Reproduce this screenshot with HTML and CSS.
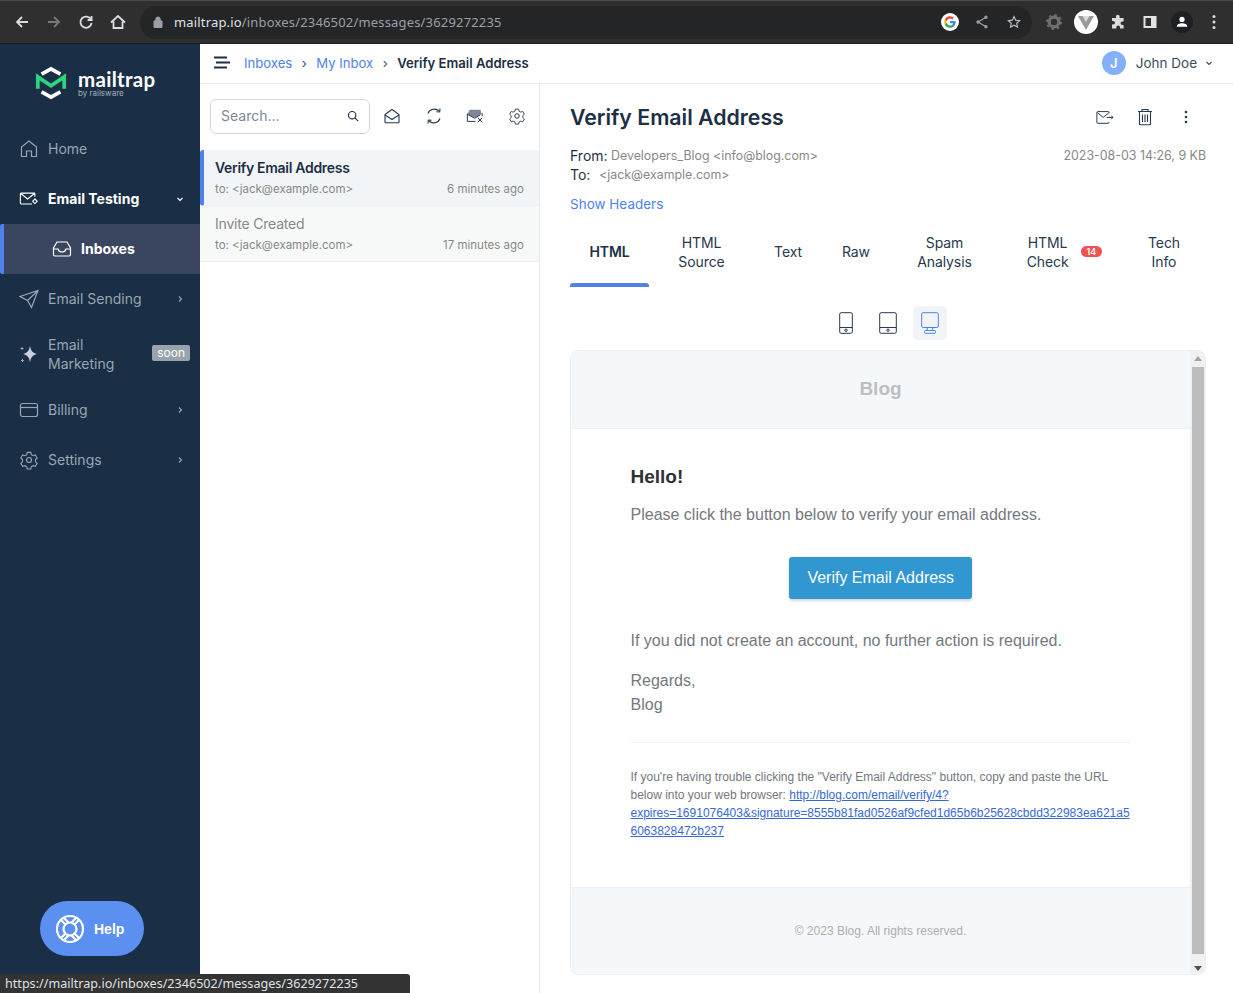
FILE: index.html
```html
<!DOCTYPE html>
<html>

<head>
  <meta charset="utf-8">
  <title>Verify Email Address</title>
  <link rel="stylesheet" href="styles.css">
</head>

<body>

  <!-- browser toolbar -->
  <header class="browser">
    <div class="browser-nav">
      <svg class="b-icon" viewBox="0 0 16 16"><path d="M14 8H3M8 3 3 8l5 5" /></svg>
      <svg class="b-icon dim" viewBox="0 0 16 16"><path d="M2 8h11M8 3l5 5-5 5" /></svg>
      <svg class="b-icon" viewBox="0 0 16 16"><path d="M13 5.5A5.6 5.6 0 1 0 13.6 9M13.6 2v4h-4" /></svg>
      <svg class="b-icon" viewBox="0 0 16 16"><path d="M1 8.5 8 2l7 6.500M3.500 7.500V14h9V7.500" /></svg>
    </div>
    <div class="omnibox">
      <svg class="lock" viewBox="0 0 10 12"><path d="M1 5h8v6.500H1zM2.800 5V3.200a2.200 2.200 0 0 1 4.400 0V5" /></svg>
      <span class="url"><b>mailtrap.io</b>/inboxes/2346502/messages/3629272235</span>
      <svg class="g-logo" viewBox="0 0 18 18">
        <circle cx="9" cy="9" r="9" fill="#fff" />
        <path d="M14.600 9.100c0-.4 0-.8-.1-1.100H9v2.200h3.100a2.700 2.700 0 0 1-1.100 1.700v1.500h1.900c1.100-1 1.700-2.500 1.700-4.300z" fill="#4285f4" />
        <path d="M9 14.800c1.600 0 2.900-.5 3.900-1.400L11 11.900c-.5.400-1.200.6-2 .6-1.500 0-2.800-1-3.300-2.400H3.800v1.500A5.800 5.800 0 0 0 9 14.800z" fill="#34a853" />
        <path d="M5.700 10.100a3.500 3.500 0 0 1 0-2.200V6.400H3.800a5.800 5.800 0 0 0 0 5.200z" fill="#fbbc05" />
        <path d="M9 5.500c.9 0 1.600.3 2.200.9l1.700-1.700A5.800 5.800 0 0 0 3.800 6.400l1.900 1.500C6.200 6.500 7.500 5.500 9 5.500z" fill="#ea4335" />
      </svg>
      <svg class="b-icon small" viewBox="0 0 16 16"><path d="M12.500 2.500 3.500 8l9 5.500" /><circle cx="12.500" cy="2.500" r="1.300" fill="#9aa0a6" /><circle cx="3.500" cy="8" r="1.300" fill="#9aa0a6" /><circle cx="12.500" cy="13.500" r="1.300" fill="#9aa0a6" /></svg>
      <svg class="b-icon small star" viewBox="0 0 16 16"><path d="m8 1.800 1.900 4.100 4.500.5-3.300 3 .9 4.500L8 11.600l-4 2.300.9-4.500-3.300-3 4.500-.5z" /></svg>
    </div>
    <div class="browser-ext">
      <svg class="ext-gear" viewBox="0 0 16 16"><circle cx="8" cy="8" r="4.800" fill="none" stroke="#6f6f6f" stroke-width="3.200" /><circle cx="8" cy="8" r="7" fill="none" stroke="#6f6f6f" stroke-width="2" stroke-dasharray="2.500 3" /></svg>
      <span class="ext-vue"><svg viewBox="0 0 16 14"><path d="M0 0h16L8 14z" fill="#9a9a9a" /><path d="M4.500 0h7L8 6z" fill="#dcdcdc" /></svg></span>
      <svg class="ext-icon" viewBox="0 0 16 16"><path d="M6 2.500a1.800 1.800 0 0 1 3.600 0V4h4v3.500h-1.300a1.800 1.800 0 0 0 0 3.600h1.300v3.400H10v-1.200a1.800 1.800 0 0 0-3.600 0v1.200H2v-4h1.200a1.800 1.800 0 0 0 0-3.600H2V4h4z" fill="#dcdcdc" /></svg>
      <svg class="ext-icon" viewBox="0 0 16 16"><path d="M1.500 2h13v12h-13zM3.500 4v8H9V4z" fill="#e3e3e3" fill-rule="evenodd" /></svg>
      <span class="ext-user"><svg viewBox="0 0 16 16"><circle cx="8" cy="5" r="3" fill="#fff" /><path d="M2 13.500c0-3 3-4 6-4s6 1 6 4z" fill="#fff" /></svg></span>
      <svg class="ext-more" viewBox="0 0 4 16"><circle cx="2" cy="2.500" r="1.500" /><circle cx="2" cy="8" r="1.500" /><circle cx="2" cy="13.500" r="1.500" /></svg>
    </div>
  </header>

  <div class="app">

    <!-- left navigation -->
    <aside class="sidebar">
      <div class="logo">
        <svg class="logo-mark" viewBox="0 0 34 36" fill="none" stroke-width="4">
          <path d="M7 8.500 17 3l10 5.500" stroke="#fff" />
          <path d="M7 27.500 17 33l10-5.500" stroke="#fff" />
          <path d="M3 24V11.500l14 9.500 14-9.500V24" stroke="#2dd283" />
        </svg>
        <div class="logo-text">
          <div class="logo-name">mailtrap</div>
          <div class="logo-by">by railsware</div>
        </div>
      </div>
      <nav class="nav">
        <a class="nav-item">
          <svg class="nav-icon" viewBox="0 0 20 20"><path d="M2.500 17.500V8L10 2l7.500 6v9.500h-5V12h-5v5.500z" /></svg>
          <span class="nav-label">Home</span>
        </a>
        <a class="nav-item is-open">
          <svg class="nav-icon" viewBox="0 0 22 20"><path d="M14.500 15.500H2.500a1 1 0 0 1-1-1v-10a1 1 0 0 1 1-1h14a1 1 0 0 1 1 1v3M2 4l7.500 6L17 4" /><path d="m17.500 10 2.500 2.500-2.500 2.500-2.500-2.500z" /></svg>
          <span class="nav-label">Email Testing</span>
          <svg class="chev" viewBox="0 0 8 8"><path d="m1.500 3 2.500 2.500L6.500 3" /></svg>
        </a>
        <a class="nav-item nav-sub">
          <svg class="nav-icon" viewBox="0 0 20 20"><path d="M5 3h10l3.500 6v6.500a1.500 1.500 0 0 1-1.500 1.500H3a1.500 1.500 0 0 1-1.500-1.500V9zM1.500 10H6c.5 2 2 3 4 3s3.500-1 4-3h4.500" /></svg>
          <span class="nav-label">Inboxes</span>
        </a>
        <a class="nav-item">
          <svg class="nav-icon" viewBox="0 0 20 20"><path d="M1 7.500 19 1.500 12.500 18.500 8.500 11.500zM8.500 11.500 19 1.500" /></svg>
          <span class="nav-label">Email Sending</span>
          <svg class="chev" viewBox="0 0 8 8"><path d="m3 1.500 2.500 2.500L3 6.500" /></svg>
        </a>
        <a class="nav-item nav-tall">
          <svg class="nav-icon" viewBox="0 0 20 20"><path class="spark" d="M11 1.500c.8 5 2 7 7 8.500-5 1.500-6.200 3.500-7 8.500-.8-5-2-7-7-8.500 5-1.500 6.200-3.500 7-8.500z" /><path d="M3 3v3M1.500 4.500h3M3.500 15v3M2 16.500h3" stroke-width="1" /></svg>
          <span class="nav-label">Email<br>Marketing</span>
          <span class="soon">soon</span>
        </a>
        <a class="nav-item">
          <svg class="nav-icon" viewBox="0 0 20 20"><rect x="1.500" y="3.500" width="17" height="13" rx="2" /><path d="M1.500 7.500h17" /></svg>
          <span class="nav-label">Billing</span>
          <svg class="chev" viewBox="0 0 8 8"><path d="m3 1.500 2.500 2.500L3 6.500" /></svg>
        </a>
        <a class="nav-item">
          <svg class="nav-icon" viewBox="0 0 20 20"><path d="M8 1.500h4l.5 2.500 2.200 1.200 2.400-.8 2 3.400-1.900 1.700v2.500l1.900 1.700-2 3.400-2.400-.8-2.200 1.200-.5 2.500H8l-.5-2.500-2.200-1.200-2.400.8-2-3.400 1.900-1.700V9.500L.900 7.800l2-3.400 2.400.8L7.500 4z" transform="translate(1 1) scale(.9)" /><circle cx="10" cy="10" r="2.500" /></svg>
          <span class="nav-label">Settings</span>
          <svg class="chev" viewBox="0 0 8 8"><path d="m3 1.500 2.500 2.500L3 6.500" /></svg>
        </a>
      </nav>
      <button class="help">
        <svg viewBox="0 0 30 30" fill="none" stroke="#fff" stroke-width="2.200">
          <circle cx="15" cy="15" r="13" />
          <circle cx="15" cy="15" r="6.500" />
          <path d="m5.500 5.500 5 5M24.500 5.500l-5 5M5.500 24.500l5-5M24.500 24.500l-5-5M9 4l4.500 4.500M21 4l-4.500 4.500M9 26l4.500-4.500M21 26l-4.500-4.500" />
        </svg>
        Help
      </button>
    </aside>

    <div class="content">

      <!-- breadcrumbs -->
      <div class="topbar">
        <svg class="burger" viewBox="0 0 16 13"><path d="M0 1.500h13M2 6.500h14M0 11.500h13" /></svg>
        <a class="crumb">Inboxes</a>
        <span class="crumb-sep">›</span>
        <a class="crumb">My Inbox</a>
        <span class="crumb-sep">›</span>
        <span class="crumb-now">Verify Email Address</span>
        <div class="user">
          <span class="avatar">J</span>
          <span class="user-name">John Doe</span>
          <svg class="user-chev" viewBox="0 0 8 8"><path d="m1.500 3 2.500 2.500L6.500 3" /></svg>
        </div>
      </div>

      <div class="columns">

        <!-- message list -->
        <section class="list">
          <div class="list-tools">
            <div class="search">
              <span class="search-text">Search...</span>
              <svg class="tool-sm" viewBox="0 0 14 14"><circle cx="6" cy="6" r="4.300" /><path d="m9.200 9.200 3.800 3.800" /></svg>
            </div>
            <svg class="tool" viewBox="0 0 18 18"><path d="M2 7.500 9 2.500l7 5V15a.8.8 0 0 1-.8.800H2.800A.8.8 0 0 1 2 15z" /><path d="m2 8 7 4.500L16 8" /></svg>
            <svg class="tool" viewBox="0 0 18 18"><path d="M3 6.500A6.800 6.800 0 0 1 14 4M15 11.500A6.800 6.800 0 0 1 4 14" /><path d="m15 1.500-.3 3.500-3.200-.3M3 16.500l.3-3.500 3.200.3" /></svg>
            <svg class="tool" viewBox="0 0 20 18"><path class="tool-fill" d="M1.500 7 4 2h12l1.500 5-8 4z" /><path d="M1.500 6.500V15h9M18 6V9M1.500 7l8 4.500 6-3.500M13 11l5 5M18 11l-5 5" /></svg>
            <svg class="tool" viewBox="0 0 20 20"><path d="M8 1.500h4l.5 2.500 2.200 1.200 2.400-.8 2 3.400-1.900 1.700v2.500l1.900 1.700-2 3.400-2.400-.8-2.200 1.200-.5 2.500H8l-.5-2.500-2.200-1.200-2.400.8-2-3.400 1.900-1.700V9.500L.900 7.800l2-3.400 2.400.8L7.500 4z" transform="translate(1 1) scale(.9)" /><circle cx="10" cy="10" r="2.500" /></svg>
          </div>
          <a class="msg is-active">
            <div class="msg-subject">Verify Email Address</div>
            <div class="msg-meta"><span>to: &lt;jack@example.com&gt;</span><span>6 minutes ago</span></div>
          </a>
          <a class="msg">
            <div class="msg-subject">Invite Created</div>
            <div class="msg-meta"><span>to: &lt;jack@example.com&gt;</span><span>17 minutes ago</span></div>
          </a>
        </section>

        <!-- message details -->
        <section class="detail">
          <div class="detail-head">
            <h1>Verify Email Address</h1>
            <div class="detail-actions">
              <svg class="tool" viewBox="0 0 20 16"><path d="M14.500 13.500v.5a1 1 0 0 1-1 1H2a1 1 0 0 1-1-1V3a1 1 0 0 1 1-1h11.500a1 1 0 0 1 1 1v1M1.500 3l6.500 5.500L14 3.500" /><path d="M12 8.500h7M17 6.800l2 1.700-2 1.700" /></svg>
              <svg class="tool" viewBox="0 0 16 18"><path d="M1 3.500h14M5 3.500V1.500h6v2M2.500 3.500V16a.8.8 0 0 0 .8.800h9.400a.8.8 0 0 0 .8-.8V3.500M5.500 6.500v7.500M8 6.500v7.500M10.500 6.500v7.500" /></svg>
              <svg class="more" viewBox="0 0 4 16"><circle cx="2" cy="3" r="1.300" /><circle cx="2" cy="8" r="1.300" /><circle cx="2" cy="13" r="1.300" /></svg>
            </div>
          </div>
          <div class="meta-row">
            <span class="meta-key">From:</span>
            <span class="meta-val">Developers_Blog &lt;info@blog.com&gt;</span>
            <span class="meta-date">2023-08-03 14:26, 9 KB</span>
          </div>
          <div class="meta-row">
            <span class="meta-key meta-to">To:</span>
            <span class="meta-val">&lt;jack@example.com&gt;</span>
          </div>
          <a class="show-headers">Show Headers</a>

          <div class="tabs">
            <a class="tab tab-html is-active">HTML</a>
            <a class="tab tab-source">HTML<br>Source</a>
            <a class="tab tab-text">Text</a>
            <a class="tab tab-raw">Raw</a>
            <a class="tab tab-spam">Spam<br>Analysis</a>
            <a class="tab tab-check"><span>HTML<br>Check</span><span class="count">14</span></a>
            <a class="tab tab-tech">Tech<br>Info</a>
          </div>

          <div class="devices">
            <span class="device"><svg viewBox="0 0 14 22"><rect x=".7" y=".7" width="12.600" height="20.600" rx="1.500" /><path d="M.7 15.500h12.600" /><circle cx="7" cy="18.200" r="1.200" /></svg></span>
            <span class="device"><svg viewBox="0 0 18 22"><rect x=".7" y=".7" width="16.600" height="20.600" rx="1.500" /><path d="M.7 15.500h16.600" /><circle cx="9" cy="18.200" r="1.200" /></svg></span>
            <span class="device is-active"><svg viewBox="0 0 18 22"><rect x=".7" y=".7" width="16.600" height="14.800" rx="1.500" /><path d="M6.500 15.500 6 18.500M11.500 15.500l.5 3" /><rect x="3.500" y="18.500" width="11" height="2.800" rx=".8" /></svg></span>
          </div>

          <!-- rendered email -->
          <div class="frame">
            <div class="mail">
              <div class="mail-brand">Blog</div>
              <div class="mail-body">
                <h2>Hello!</h2>
                <p>Please click the button below to verify your email address.</p>
                <div class="mail-cta"><a class="mail-button">Verify Email Address</a></div>
                <p>If you did not create an account, no further action is required.</p>
                <p class="mail-sign">Regards,<br>Blog</p>
                <div class="mail-sub">If you're having trouble clicking the "Verify Email Address" button, copy and paste the URL below into your web browser: <a>http://blog.com/email/verify/4?expires=1691076403&amp;signature=8555b81fad0526af9cfed1d65b6b25628cbdd322983ea621a56063828472b237</a></div>
              </div>
              <div class="mail-footer">© 2023 Blog. All rights reserved.</div>
            </div>
            <div class="scrollbar">
              <span class="arrow-up"></span>
              <span class="thumb"></span>
              <span class="arrow-down"></span>
            </div>
          </div>
        </section>
      </div>
    </div>
  </div>

  <div class="status">https://mailtrap.io/inboxes/2346502/messages/3629272235</div>

</body>

</html>
```

FILE: styles.css
```css
* {
  box-sizing: border-box;
}

html,
body {
  margin: 0;
  height: 993px;
  overflow: hidden;
}

body {
  font-family: "Inter", "Liberation Sans", sans-serif;
  color: #1d2f45;
  background-color: #fff;
}

svg {
  display: block;
  flex: none;
}

a {
  text-decoration: none;
}

/*********** Browser toolbar ***********/

.browser {
  height: 44px;
  display: flex;
  align-items: center;
  background-color: #2f2f2f;
  border-top: 1px solid #4a4a4a;
  border-bottom: 1px solid #1c1c1c;
}

.browser-nav {
  width: 140px;
  padding-left: 14px;
  display: flex;
  gap: 16px;
}

.b-icon {
  width: 16px;
  height: 16px;
  fill: none;
  stroke: #dadce0;
  stroke-width: 1.800;
}

.b-icon.dim {
  stroke: #777;
}

.b-icon.small {
  width: 14px;
  height: 14px;
  stroke: #9aa0a6;
  stroke-width: 1.300;
}

.b-icon.star {
  stroke: #c0c0c0;
}

.omnibox {
  width: 892px;
  height: 33px;
  padding: 0 11px 0 13px;
  display: flex;
  align-items: center;
  background-color: #242526;
  border-radius: 17px;
}

.lock {
  width: 10px;
  height: 12px;
  fill: #9aa0a6;
  stroke: #9aa0a6;
  stroke-width: 1;
}

.url {
  margin-left: 11px;
  font-family: "Noto Sans", sans-serif;
  font-size: 13px;
  letter-spacing: 0.17px;
  color: #9aa0a6;
  flex: 1;
}

.url b {
  font-weight: 400;
  color: #dfe1e5;
}

.g-logo {
  width: 18px;
  height: 18px;
  margin-right: 16px;
}

.star {
  margin-left: 18px;
}

.browser-ext {
  flex: 1;
  display: flex;
  align-items: center;
  padding-left: 14px;
}

.ext-gear {
  width: 16px;
  height: 16px;
}

.ext-vue {
  width: 24px;
  height: 24px;
  margin-left: 12px;
  padding: 6px 4px;
  border-radius: 50%;
  background-color: #fff;
}

.ext-icon {
  width: 16px;
  height: 16px;
  margin-left: 12px;
}

.ext-icon + .ext-icon {
  margin-left: 16px;
}

.ext-user {
  width: 22px;
  height: 22px;
  margin-left: 13px;
  padding: 4px;
  border-radius: 50%;
  background-color: #1e1f22;
}

.ext-more {
  width: 4px;
  height: 16px;
  margin-left: 19px;
  fill: #dadce0;
}

/*********** App shell ***********/

.app {
  height: 949px;
  display: flex;
}

.sidebar {
  width: 200px;
  flex: none;
  display: flex;
  flex-direction: column;
  background-color: #1a2e45;
}

.logo {
  height: 80px;
  padding: 0 0 2px 35px;
  display: flex;
  align-items: center;
  gap: 10px;
}

.logo-mark {
  width: 32px;
  height: 36px;
}

.logo-text {
  padding-left: 1px;
}

.logo-name {
  font-family: "Lato", sans-serif;
  font-size: 20.500px;
  line-height: 20px;
  font-weight: 700;
  color: #fff;
  letter-spacing: 0.3px;
}

.logo-by {
  font-size: 8px;
  line-height: 9px;
  color: #a3afbd;
}

.nav {
  display: flex;
  flex-direction: column;
}

.nav-item {
  height: 50px;
  padding: 0 16px 1px 19px;
  display: flex;
  align-items: center;
  font-size: 14px;
  line-height: 19px;
  color: #99a6b5;
}

.nav-icon {
  width: 20px;
  height: 20px;
  margin-right: 9px;
  fill: none;
  stroke: #99a6b5;
  stroke-width: 1.200;
}

.nav-icon .spark {
  fill: #c9d0d8;
  stroke: none;
}

.nav-label {
  flex: 1;
}

.is-open,
.nav-sub {
  font-weight: 700;
  color: #fff;
}

.is-open .nav-icon,
.nav-sub .nav-icon {
  stroke: #fff;
}

.nav-sub {
  background-color: #3a4560;
  border-left: 4px solid #4f82e8;
  border-radius: 2px 0 0 2px;
  padding-left: 48px;
}

.nav-tall {
  height: 61px;
}

.chev {
  width: 8px;
  height: 8px;
  fill: none;
  stroke: #99a6b5;
  stroke-width: 1.100;
}

.is-open .chev {
  stroke: #fff;
}

.soon {
  margin: 0 -6px 2px 0;
  padding: 0 5px;
  height: 16px;
  font-size: 12px;
  line-height: 15px;
  color: #fff;
  background-color: #99a3ae;
  border-radius: 2px;
}

.help {
  width: 104px;
  height: 55px;
  margin: auto 0 37px 40px;
  padding: 0 0 0 15px;
  display: flex;
  align-items: center;
  gap: 9px;
  font-family: "Liberation Sans", sans-serif;
  font-size: 14px;
  font-weight: 700;
  color: #fff;
  background-color: #5b8ff0;
  border: none;
  border-radius: 28px;
}

.help svg {
  width: 30px;
  height: 30px;
}

.content {
  flex: 1;
  display: flex;
  flex-direction: column;
  min-width: 0;
}

/*********** Breadcrumbs ***********/

.topbar {
  height: 40px;
  padding: 0 20px 2px 14px;
  display: flex;
  align-items: center;
  font-size: 13.100px;
  border-bottom: 1px solid #e8ebee;
}

.burger {
  width: 16px;
  height: 13px;
  margin-right: 14px;
  fill: none;
  stroke: #1d2f45;
  stroke-width: 1.800;
}

.crumb {
  color: #4f82e8;
}

.crumb-sep {
  margin: 0 9.500px;
  font-size: 13px;
  color: #3d4d60;
}

.crumb-now {
  font-weight: 600;
}

.user {
  margin-left: auto;
  display: flex;
  align-items: center;
}

.avatar {
  width: 24px;
  height: 24px;
  display: flex;
  align-items: center;
  justify-content: center;
  font-size: 13px;
  font-weight: 600;
  color: #fff;
  background-color: #84b0fa;
  border-radius: 50%;
}

.user-name {
  margin-left: 10px;
  font-size: 13.500px;
  color: #3d4a5c;
}

.user-chev {
  width: 8px;
  height: 8px;
  margin-left: 8px;
  fill: none;
  stroke: #3d4a5c;
  stroke-width: 1.100;
}

.columns {
  flex: 1;
  display: flex;
  min-height: 0;
}

/*********** Message list ***********/

.list {
  width: 340px;
  flex: none;
  border-right: 1px solid #e8ebee;
}

.list-tools {
  height: 66px;
  padding: 15px 13px 0 10px;
  display: flex;
  align-items: flex-start;
}

.search {
  width: 160px;
  height: 35px;
  padding: 0 10px 2px;
  margin-right: 13px;
  display: flex;
  align-items: center;
  justify-content: space-between;
  font-size: 14px;
  color: #7c8896;
  border: 1px solid #d5d9de;
  border-radius: 6px;
}

.tool-sm {
  width: 12px;
  height: 12px;
  fill: none;
  stroke: #1d2f45;
  stroke-width: 1.300;
}

.tool {
  width: 18px;
  height: 18px;
  fill: none;
  stroke: #27394e;
  stroke-width: 1.100;
}

.list-tools .tool {
  margin-top: 8px;
  margin-right: 23.500px;
}

.list-tools .tool:last-child {
  margin-right: 0;
}

.tool-fill {
  fill: #7b8798;
  stroke: none;
}

.msg {
  height: 56px;
  padding: 8px 15px 0 15px;
  display: block;
  background-color: #f7f9f9;
  border-bottom: 1px solid #edf0f2;
}

.msg.is-active {
  background-color: #f1f5f7;
  border-left: 4px solid #4f82e8;
  border-radius: 3px 0 0 3px;
  padding-left: 11px;
}

.msg-subject {
  font-size: 14px;
  line-height: 19px;
  letter-spacing: -0.2px;
  color: #888;
}

.is-active .msg-subject {
  font-weight: 600;
  letter-spacing: -0.3px;
  color: #1d2f45;
}

.msg-meta {
  margin-top: 4px;
  display: flex;
  justify-content: space-between;
  font-size: 11.500px;
  line-height: 16px;
  color: #888;
}

/*********** Message details ***********/

.detail {
  flex: 1;
  min-width: 0;
  padding: 19px 27px 0 30px;
}

.detail-head {
  height: 29px;
  display: flex;
  align-items: center;
  justify-content: space-between;
  margin-bottom: 14px;
}

h1 {
  margin: 0;
  font-size: 21.300px;
  line-height: 29px;
  font-weight: 600;
}

.detail-actions {
  display: flex;
  align-items: center;
  gap: 22px;
  padding: 0 18px 2px 0;
}

.more {
  width: 4px;
  height: 16px;
  margin-left: 8px;
  fill: #27394e;
}

.meta-row {
  height: 19px;
  display: flex;
  align-items: center;
  font-size: 12.400px;
  color: #888;
}

.meta-key {
  width: 41px;
  font-size: 14px;
  color: #1d2f45;
}

.meta-to {
  width: 29px;
}

.meta-date {
  margin-left: auto;
}

.show-headers {
  display: block;
  margin-top: 11px;
  font-size: 13.500px;
  line-height: 19px;
  color: #4f82e8;
}

.tabs {
  height: 64px;
  margin-top: 9px;
  display: flex;
  font-size: 14px;
  line-height: 19px;
  letter-spacing: -0.1px;
  text-align: center;
  color: #27394e;
}

.tab {
  position: relative;
  display: flex;
  align-items: center;
  justify-content: center;
  padding-bottom: 7px;
}

.tab-html {
  width: 79px;
}

.tab-source {
  width: 105px;
}

.tab-text {
  width: 68px;
}

.tab-raw {
  width: 68px;
}

.tab-spam {
  width: 109px;
}

.tab-check {
  width: 123px;
  gap: 12px;
  padding-left: 8px;
}

.tab-tech {
  width: 84px;
}

.tab.is-active {
  font-weight: 600;
  color: #1d2f45;
}

/* rounded bar under the open tab */
.tab.is-active::after {
  content: "";
  position: absolute;
  left: 0;
  right: 0;
  bottom: 0;
  height: 4px;
  background-color: #4f82e8;
  border-radius: 3px 3px 0 0;
}

.count {
  padding: 0 6px;
  height: 11px;
  font-size: 9px;
  line-height: 11px;
  font-weight: 600;
  letter-spacing: 0;
  color: #fff;
  background-color: #f0524f;
  border-radius: 6px;
}

.devices {
  height: 63px;
  padding-top: 19px;
  display: flex;
  justify-content: center;
  gap: 8px;
}

.device {
  width: 34px;
  height: 34px;
  display: flex;
  align-items: center;
  justify-content: center;
  border-radius: 5px;
}

.device svg {
  height: 22px;
  width: auto;
  fill: none;
  stroke: #27394e;
  stroke-width: 1;
}

.device.is-active {
  background-color: #f1f5f7;
}

.device.is-active svg {
  stroke: #4f82e8;
}

/*********** Rendered email ***********/

.frame {
  height: 625px;
  display: flex;
  overflow: hidden;
  font-family: "Liberation Sans", sans-serif;
  border: 1px solid #edf0f2;
  border-radius: 8px;
}

.mail {
  flex: 1;
  display: flex;
  flex-direction: column;
  min-width: 0;
}

.mail-brand {
  height: 78px;
  padding-bottom: 2px;
  display: flex;
  align-items: center;
  justify-content: center;
  font-size: 19px;
  font-weight: 700;
  color: #bbbfc3;
  background-color: #f5f8fa;
  border-bottom: 1px solid #edeff2;
}

.mail-body {
  flex: 1;
  padding: 37px 59px 0 59.500px;
}

h2 {
  margin: 0 0 15px;
  font-size: 19px;
  line-height: 22px;
  color: #2f3133;
}

.mail-body p {
  margin: 0 0 16px;
  font-size: 16px;
  line-height: 24px;
  color: #74787e;
}

.mail-cta {
  display: flex;
  justify-content: center;
  margin: 30px 0;
}

.mail-button {
  width: 183px;
  height: 42px;
  display: flex;
  align-items: center;
  justify-content: center;
  font-size: 16px;
  color: #fff;
  background-color: #3097d1;
  border-radius: 3px;
  box-shadow: 0 2px 3px rgba(0, 0, 0, 0.16);
}

.mail-body .mail-sign {
  margin: 0;
}

.mail-sub {
  margin-top: 25px;
  padding-top: 25px;
  font-size: 12px;
  line-height: 18px;
  color: #74787e;
  border-top: 1px solid #edeff2;
  overflow-wrap: anywhere;
}

.mail-sub a {
  color: #3869d4;
  text-decoration: underline;
}

.mail-footer {
  height: 87px;
  display: flex;
  align-items: center;
  justify-content: center;
  font-size: 12px;
  color: #aeaeae;
  background-color: #f5f8fa;
  border-top: 1px solid #edeff2;
}

.scrollbar {
  width: 15px;
  flex: none;
  display: flex;
  flex-direction: column;
  align-items: center;
  background-color: #f1f1f1;
}

.thumb {
  width: 12px;
  flex: 1;
  margin: 3px 0 7px;
  background-color: #bcbcbc;
}

.arrow-up,
.arrow-down {
  width: 0;
  height: 0;
  margin: 5px 0 3px;
  border-left: 4px solid transparent;
  border-right: 4px solid transparent;
}

.arrow-up {
  border-bottom: 5px solid #a3a3a3;
}

.arrow-down {
  border-top: 5px solid #505050;
}

/*********** Link preview bubble ***********/

.status {
  position: absolute;
  left: 0;
  bottom: 0;
  width: 410px;
  height: 19px;
  padding-left: 5px;
  font-family: "Noto Sans", sans-serif;
  font-size: 12.600px;
  line-height: 19px;
  color: #dfe1e5;
  background-color: #333;
  border-radius: 0 3px 0 0;
}
```
